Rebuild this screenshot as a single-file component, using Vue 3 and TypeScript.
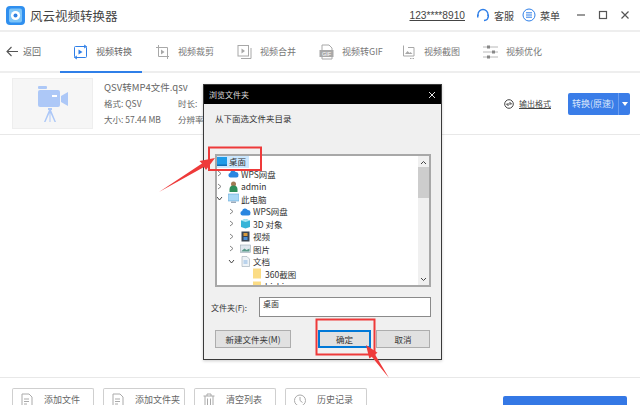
<script setup lang="ts">
type Tab = { label: string; icon: string; active?: boolean }
type Row = { label: string; level: number; arrow: '' | 'right' | 'down'; icon: string; selected?: boolean }

const tabs: Tab[] = [
  { label: '视频转换', icon: 'convert', active: true },
  { label: '视频裁剪', icon: 'crop' },
  { label: '视频合并', icon: 'merge' },
  { label: '视频转GIF', icon: 'gif' },
  { label: '视频截图', icon: 'shot' },
  { label: '视频优化', icon: 'tune' },
]

const rows: Row[] = [
  { label: '桌面', level: -1, arrow: '', icon: 'desktop', selected: true },
  { label: 'WPS网盘', level: 0, arrow: 'right', icon: 'cloud' },
  { label: 'admin', level: 0, arrow: 'right', icon: 'user' },
  { label: '此电脑', level: 0, arrow: 'down', icon: 'pc' },
  { label: 'WPS网盘', level: 1, arrow: 'right', icon: 'cloud' },
  { label: '3D 对象', level: 1, arrow: 'right', icon: 'cube' },
  { label: '视频', level: 1, arrow: 'right', icon: 'film' },
  { label: '图片', level: 1, arrow: 'right', icon: 'pic' },
  { label: '文档', level: 1, arrow: 'down', icon: 'doc' },
  { label: '360截图', level: 2, arrow: '', icon: 'folder' },
  { label: 'bizhi', level: 2, arrow: '', icon: 'folder' },
]

const actions = ['添加文件', '添加文件夹', '清空列表', '历史记录']
</script>

<template>
  <div class="app">
    <header class="titlebar">
      <svg class="logo" width="19" height="19" viewBox="0 0 19 19">
        <rect width="19" height="19" rx="4" fill="#2f8fef" />
        <rect x="3" y="2.5" width="13" height="14" rx="2" fill="#7cc4f8" />
        <circle cx="9.5" cy="9.5" r="4.6" fill="#fff" />
        <circle cx="9.5" cy="9.5" r="2" fill="#2f7fe0" />
      </svg>
      <span class="app-name">风云视频转换器</span>
      <span class="phone">123****8910</span>
      <svg class="top-icon" width="14" height="14" viewBox="0 0 14 14" fill="none" stroke="#2f7fe8" stroke-width="1.3">
        <path d="M2 8V6.5a5 5 0 0 1 10 0V8" />
        <path d="M12 9c0 2-1.500 3.300-4 3.500" />
        <rect x="1" y="6.500" width="1.500" height="3" fill="#2f7fe8" stroke="none" />
        <rect x="11.500" y="6.500" width="1.500" height="3" fill="#2f7fe8" stroke="none" />
      </svg>
      <span class="top-text">客服</span>
      <svg class="top-icon menu-icon" width="14" height="14" viewBox="0 0 14 14" fill="none" stroke="#2f7fe8" stroke-width="1">
        <circle cx="7" cy="7" r="6" />
        <path d="M4 4.800h6M4 7h6M4 9.200h6" />
      </svg>
      <span class="top-text">菜单</span>
      <svg class="win-btns" width="52" height="10" viewBox="0 0 52 10" fill="none" stroke="#555" stroke-width="1.200">
        <path d="M0 5h8" />
        <rect x="22.500" y="1.500" width="7" height="7" />
        <path d="M44.500 1.500l7 7M51.500 1.500l-7 7" />
      </svg>
    </header>

    <nav class="tabs">
      <div class="back">
        <svg width="12" height="11" viewBox="0 0 12 11" fill="none" stroke="#555" stroke-width="1.100">
          <path d="M12 5.500H1M5.500 1L1 5.500 5.500 10" />
        </svg>
        <span>返回</span>
      </div>
      <div v-for="t in tabs" :key="t.label" class="tab" :class="{ active: t.active }">
        <svg class="tab-icon" width="15" height="16" viewBox="0 0 15 16" fill="none" :stroke="t.active ? '#2f7fe8' : '#a8a8a8'" stroke-width="1">
          <template v-if="t.icon === 'convert'">
            <rect x="1.500" y="2.500" width="12" height="11" rx="1" />
            <path d="M5.500 5.500l4 2.500-4 2.500z" fill="#2f7fe8" stroke="none" />
            <path d="M11 1l2.500 1.500L11 4M4 12l-2.500 1.500L4 15" />
          </template>
          <template v-else-if="t.icon === 'crop'">
            <path d="M3.500 1v11.500H14M1 3.500h11.500V15" />
            <path d="M6 5.500l3.500 2.500L6 10.500z" fill="#a8a8a8" stroke="none" />
          </template>
          <template v-else-if="t.icon === 'merge'">
            <rect x="1" y="1.500" width="10.500" height="10.500" />
            <path d="M14 4v10.500H4" />
            <path d="M4.500 4.500l3.500 2.500-3.500 2.500z" fill="#a8a8a8" stroke="none" />
          </template>
          <template v-else-if="t.icon === 'gif'">
            <path d="M3 6V1h7l3 3v2M3 13v2h10v-2" />
            <rect x="0.500" y="6" width="14" height="7" fill="#a8a8a8" stroke="none" />
            <text x="7.500" y="11.500" font-size="5.500" text-anchor="middle" fill="#fff" stroke="none" font-family="Liberation Sans, sans-serif">GIF</text>
          </template>
          <template v-else-if="t.icon === 'shot'">
            <path d="M2.500 1.500v10.500H13V3.500H7" />
            <path d="M4 10l2.500-3 2 2 1-1 2 2z" fill="#a8a8a8" stroke="none" />
            <path d="M9 14.500h5" stroke-dasharray="1.500 1" />
          </template>
          <template v-else>
            <path d="M0 3h15M0 8h15M0 13h15" stroke="#b8b8b8" />
            <rect x="4" y="1.500" width="3" height="3" fill="#888" stroke="none" />
            <rect x="9" y="6.500" width="3" height="3" fill="#888" stroke="none" />
            <rect x="4" y="11.500" width="3" height="3" fill="#888" stroke="none" />
          </template>
        </svg>
        <span>{{ t.label }}</span>
      </div>
    </nav>

    <section class="file-row">
      <div class="thumb">
        <svg width="32" height="36" viewBox="0 0 32 36" fill="#adc8f7">
          <rect x="1" y="0" width="9" height="3" rx="1" />
          <rect x="1" y="4" width="22" height="17" rx="2" />
          <path d="M24 10l7-4v14l-7-4z" />
          <rect x="15" y="9" width="5" height="2" fill="#fff" />
          <path d="M11 22h4v2h-4zM12 24h2l5 12h-1.500L13.500 27v9h-1v-9L8.500 36H7z" />
        </svg>
      </div>
      <div class="file-info">
        <div class="file-name">QSV转MP4文件.qsv</div>
        <div class="meta">
          <span class="meta-a">格式: QSV</span><span>时长:</span>
        </div>
        <div class="meta">
          <span class="meta-a">大小: 57.44 MB</span><span>分辨率:</span>
        </div>
      </div>
      <div class="output">
        <svg width="10" height="10" viewBox="0 0 10 10" fill="none" stroke="#444" stroke-width="1">
          <circle cx="5" cy="5" r="4.300" />
          <path d="M2.500 5h5M5.500 3l2 2M4.500 7l-2-2" />
        </svg>
        <span>输出格式</span>
      </div>
      <div class="convert">
        <span class="convert-main">转换(原速)</span>
        <span class="convert-drop"></span>
      </div>
    </section>

    <main class="list-area"></main>

    <footer class="actions">
      <button v-for="(a, i) in actions" :key="a" class="action">
        <svg width="12" height="15" viewBox="0 0 12 15" fill="none" stroke="#aaa" stroke-width="1">
          <template v-if="i < 2">
            <path d="M1 1h7l3 3v10H1z" />
            <path d="M3 6h5M3 8.500h5M3 11h3" />
          </template>
          <template v-else-if="i === 2">
            <path d="M0.500 3h11M4 3V1h4v2M2 3v11h8V3M4.500 5.500V12M7.500 5.500V12" />
          </template>
          <template v-else>
            <circle cx="6" cy="7.500" r="5.500" />
            <path d="M6 4v3.500l2.500 2" />
          </template>
        </svg>
        <span>{{ a }}</span>
      </button>
      <div class="start"></div>
    </footer>

    <div class="dialog">
      <div class="dlg-title">
        <span>浏览文件夹</span>
        <svg width="8" height="8" viewBox="0 0 8 8" stroke="#fff" stroke-width="0.900">
          <path d="M1 1l6 6M7 1L1 7" />
        </svg>
      </div>
      <div class="dlg-body">
        <div class="dlg-hint">从下面选文件夹目录</div>
        <div class="tree">
          <div class="tree-rows">
            <div v-for="(r, i) in rows" :key="i" class="tree-row" :class="['lv' + r.level, { selected: r.selected }]">
              <svg v-if="r.level >= 0" class="chev" width="7" height="7" viewBox="0 0 7 7" fill="none" stroke="#777" stroke-width="0.900">
                <path v-if="r.arrow === 'right'" d="M2 1l3 2.500L2 6" />
                <path v-else-if="r.arrow === 'down'" d="M1 2l2.500 3L6 2" stroke="#333" />
              </svg>
              <svg class="node" width="11" height="11" viewBox="0 0 11 11">
                <template v-if="r.icon === 'desktop'">
                  <rect x="0" y="1" width="11" height="8" fill="#1e9be8" />
                  <rect x="0" y="8.500" width="11" height="1.500" fill="#0f6fb8" />
                </template>
                <template v-else-if="r.icon === 'cloud'">
                  <path d="M2.500 9.500a2.300 2.300 0 0 1-.4-4.500 3 3 0 0 1 5.600-1 2.800 2.800 0 0 1 .8 5.500z" fill="#2a86e0" />
                </template>
                <template v-else-if="r.icon === 'user'">
                  <circle cx="5.500" cy="3" r="2.500" fill="#a37a55" />
                  <path d="M1.500 11V8.500a3 3 0 0 1 8 0V11z" fill="#2f8f5a" />
                </template>
                <template v-else-if="r.icon === 'pc'">
                  <rect x="0" y="1" width="11" height="7" fill="#a9d8f5" stroke="#6aa9d8" stroke-width="0.600" />
                  <rect x="3" y="8.500" width="5" height="1.500" fill="#9ab" />
                </template>
                <template v-else-if="r.icon === 'cube'">
                  <path d="M1 2.500L5.500 1 10 2.500V9L5.500 10.500 1 9z" fill="#35b4d8" />
                  <path d="M1 2.500L5.500 4 10 2.500 5.500 1z" fill="#a5e6f2" />
                </template>
                <template v-else-if="r.icon === 'film'">
                  <rect x="1.500" y="0.500" width="8" height="10" fill="#3a4654" />
                  <rect x="3.500" y="2" width="4" height="3" fill="#d89a3a" />
                  <rect x="3.500" y="6" width="4" height="3" fill="#4a8fd8" />
                </template>
                <template v-else-if="r.icon === 'pic'">
                  <rect x="0.500" y="2" width="10" height="7.500" fill="#dfe7ee" stroke="#9aa8b4" stroke-width="0.600" />
                  <path d="M1.500 8l3-2.500 2 1.500 3-1.500V8.500h-8z" fill="#5a9a8a" />
                </template>
                <template v-else-if="r.icon === 'doc'">
                  <path d="M2 0.500h5l2.500 2.500v7.500H2z" fill="#eef3f7" stroke="#9aa8b4" stroke-width="0.600" />
                  <path d="M3.500 5h4M3.500 7h4" stroke="#5a9ad8" stroke-width="0.700" />
                </template>
                <template v-else>
                  <rect x="1" y="0.500" width="8" height="10" fill="#fbdc85" />
                </template>
              </svg>
              <span class="tree-label">{{ r.label }}</span>
            </div>
          </div>
          <div class="scrollbar">
            <svg width="7" height="5" viewBox="0 0 7 5" fill="none" stroke="#444" stroke-width="1"><path d="M1 4l2.500-2.500L6 4" /></svg>
            <div class="scroll-track"><div class="scroll-thumb"></div></div>
            <svg width="7" height="5" viewBox="0 0 7 5" fill="none" stroke="#444" stroke-width="1"><path d="M1 1l2.500 2.500L6 1" /></svg>
          </div>
        </div>
        <div class="folder-row">
          <label>文件夹(F):</label>
          <div class="folder-input">桌面</div>
        </div>
        <div class="dlg-btns">
          <button class="dlg-btn new-btn">新建文件夹(M)</button>
          <button class="dlg-btn ok-btn">确定</button>
          <button class="dlg-btn cancel-btn">取消</button>
        </div>
      </div>
    </div>

    <svg class="marks" width="640" height="405" viewBox="0 0 640 405">
      <rect x="209" y="147.500" width="52" height="22.500" fill="none" stroke="#ee3a3a" stroke-width="2" />
      <rect x="316.500" y="319.500" width="58" height="35" fill="none" stroke="#ee3a3a" stroke-width="2" />
      <polygon points="159,192 202,163.500 199.500,161 215,158 206,170 204,167" fill="#ee3a3a" />
      <polygon points="389,378 375,354.600 377.500,352.800 366,345 369.300,358.600 371.800,356.800" fill="#ee3a3a" />
    </svg>
  </div>
</template>

<style scoped>
.app {
  position: relative;
  width: 640px;
  height: 405px;
  overflow: hidden;
  display: flex;
  flex-direction: column;
  background: #fff;
  font-family: 'Noto Sans CJK SC', 'Noto Sans', sans-serif;
  color: #666;
  font-size: 9px;
}

.titlebar {
  height: 30px;
  flex: none;
  display: flex;
  align-items: center;
  padding-left: 6px;
  border-bottom: 2px solid #eeeeee;
}

.logo {
  flex: none;
}

.app-name {
  margin-left: 5px;
  font-size: 12.5px;
  color: #444;
}

.phone {
  margin-left: auto;
  font-family: 'Liberation Sans', sans-serif;
  font-size: 10.2px;
  color: #444;
  text-decoration: underline;
}

.top-icon {
  margin-left: 11px;
}

.menu-icon {
  margin-left: 8px;
}

.top-text {
  margin-left: 4px;
  font-size: 10px;
  color: #444;
}

.win-btns {
  margin-left: 17px;
  margin-right: 11px;
}

.tabs {
  height: 39px;
  flex: none;
  display: flex;
  border-bottom: 2px solid #eeeeee;
}

.back {
  width: 60px;
  flex: none;
  display: flex;
  align-items: center;
  gap: 5px;
  padding-left: 6px;
  box-sizing: border-box;
  color: #666;
}

.tab {
  width: 82px;
  flex: none;
  box-sizing: border-box;
  display: flex;
  align-items: center;
  gap: 8px;
  padding-left: 13px;
  color: #777;
  white-space: nowrap;
}

.tab-icon {
  flex: none;
}

.tab.active {
  color: #666;
  height: 41px;
  border-bottom: 2px solid #2f7fe8;
}

.file-row {
  height: 61px;
  flex: none;
  display: flex;
  align-items: center;
  padding-left: 12px;
  border-bottom: 1px solid #e8e8e8;
}

.thumb {
  width: 81px;
  height: 51px;
  flex: none;
  display: flex;
  align-items: center;
  justify-content: center;
  background: #f6f6f6;
  border: 1px solid #eeeeee;
  box-sizing: border-box;
}

.file-info {
  margin-left: 11px;
  margin-bottom: 2px;
  width: 120px;
  display: flex;
  flex-direction: column;
  gap: 2px;
}

.file-name {
  font-size: 9.5px;
  line-height: 14px;
  white-space: nowrap;
}

.meta {
  display: flex;
  font-size: 8.5px;
  line-height: 14px;
  white-space: nowrap;
}

.meta-a {
  width: 74px;
  flex: none;
}

.output {
  margin-left: auto;
  display: flex;
  align-items: center;
  gap: 5px;
  font-size: 8px;
  color: #444;
}

.output span {
  text-decoration: underline;
}

.convert {
  margin: 0 10px 0 17px;
  width: 62px;
  height: 22px;
  display: flex;
  background: #3a7de8;
  border-radius: 2px;
  color: #dbe7fb;
  font-size: 9px;
}

.convert-main {
  width: 50px;
  display: flex;
  align-items: center;
  justify-content: center;
  white-space: nowrap;
  border-right: 1px solid #6a9cee;
}

.convert-drop {
  flex: 1;
  position: relative;
}

.convert-drop::after {
  content: '';
  position: absolute;
  left: 3px;
  top: 9px;
  border-left: 3px solid transparent;
  border-right: 3px solid transparent;
  border-top: 4px solid #fff;
}

.list-area {
  flex: 1;
}

.actions {
  height: 28px;
  flex: none;
  box-sizing: border-box;
  display: flex;
  align-items: flex-start;
  gap: 9px;
  padding: 10px 13px 0 12px;
  border-top: 1px solid #e8e8e8;
}

.action {
  width: 82px;
  height: 17px;
  flex: none;
  box-sizing: border-box;
  display: flex;
  align-items: flex-start;
  gap: 11px;
  padding: 4px 0 0 8px;
  background: #fff;
  border: 1px solid #cfcfcf;
  border-bottom: none;
  border-radius: 2px 2px 0 0;
  font-family: inherit;
  font-size: 9px;
  color: #666;
  white-space: nowrap;
  overflow: hidden;
}

.action span {
  line-height: 11px;
  margin-top: 1px;
}

.start {
  margin-left: auto;
  margin-top: 8px;
  width: 124px;
  height: 9px;
  background: #3478e5;
  border-radius: 2px 2px 0 0;
}

.dialog {
  position: absolute;
  left: 203px;
  top: 84px;
  width: 239px;
  height: 276px;
  box-sizing: border-box;
  display: flex;
  flex-direction: column;
  border: 1px solid #3a3a3a;
  box-shadow: 0 1px 3px rgba(0, 0, 0, 0.2);
  background: #f0f0f0;
}

.dlg-title {
  height: 19px;
  flex: none;
  background: #000;
  color: #ddd;
  font-size: 8px;
  display: flex;
  align-items: center;
  justify-content: space-between;
  padding: 0 5px 0 5px;
}

.dlg-body {
  flex: 1;
  display: flex;
  flex-direction: column;
  padding: 0 10px 0 11px;
  color: #333;
  font-size: 8.5px;
}

.dlg-hint {
  margin-top: 7px;
  line-height: 14px;
}

.tree {
  margin-top: 29px;
  height: 133px;
  flex: none;
  box-sizing: border-box;
  display: flex;
  border: 2px solid #a8a8a8;
  background: #fff;
  overflow: hidden;
}

.tree-rows {
  flex: 1;
  margin-top: -1px;
  overflow: hidden;
}

.tree-row {
  height: 12.5px;
  display: flex;
  align-items: center;
  white-space: nowrap;
}

.tree-row.selected {
  width: 32px;
  background: #cce8ff;
}

.lv-1 {
  padding-left: 0;
}

.lv0 {
  padding-left: 0;
}

.lv1 {
  padding-left: 12px;
}

.lv2 {
  padding-left: 24px;
}

.chev {
  flex: none;
  margin-left: -1px;
  margin-right: 4px;
}

.node {
  flex: none;
  margin-left: 1px;
}

.lv-1 .node {
  margin-left: -1px;
}

.tree-label {
  margin-left: 2px;
  line-height: 12px;
}

.scrollbar {
  width: 11px;
  flex: none;
  display: flex;
  flex-direction: column;
  align-items: center;
  background: #f0f0f0;
  padding: 4px 0 3px;
  box-sizing: border-box;
}

.scroll-track {
  flex: 1;
  width: 100%;
  padding-top: 2px;
}

.scroll-thumb {
  height: 31px;
  background: #cdcdcd;
}

.folder-row {
  margin-top: 10px;
  display: flex;
  align-items: center;
  margin-left: -4px;
}

.folder-row label {
  width: 48px;
  flex: none;
  white-space: nowrap;
  font-size: 8px;
}

.folder-input {
  flex: 1;
  height: 20px;
  box-sizing: border-box;
  background: #fff;
  border: 1px solid #8a8a8a;
  padding: 0 3px;
  line-height: 12px;
  font-size: 8px;
}

.dlg-btns {
  margin-top: 13px;
  display: flex;
  height: 18px;
}

.dlg-btn {
  height: 18px;
  box-sizing: border-box;
  background: #e1e1e1;
  border: 1px solid #adadad;
  font-family: inherit;
  font-size: 8.5px;
  color: #333;
  padding: 0;
  white-space: nowrap;
}

.new-btn {
  width: 76px;
}

.ok-btn {
  width: 53px;
  margin-left: 27px;
  border: 2px solid #0078d7;
}

.cancel-btn {
  width: 54px;
  margin-left: 5px;
}

.marks {
  position: absolute;
  left: 0;
  top: 0;
  pointer-events: none;
}
</style>
